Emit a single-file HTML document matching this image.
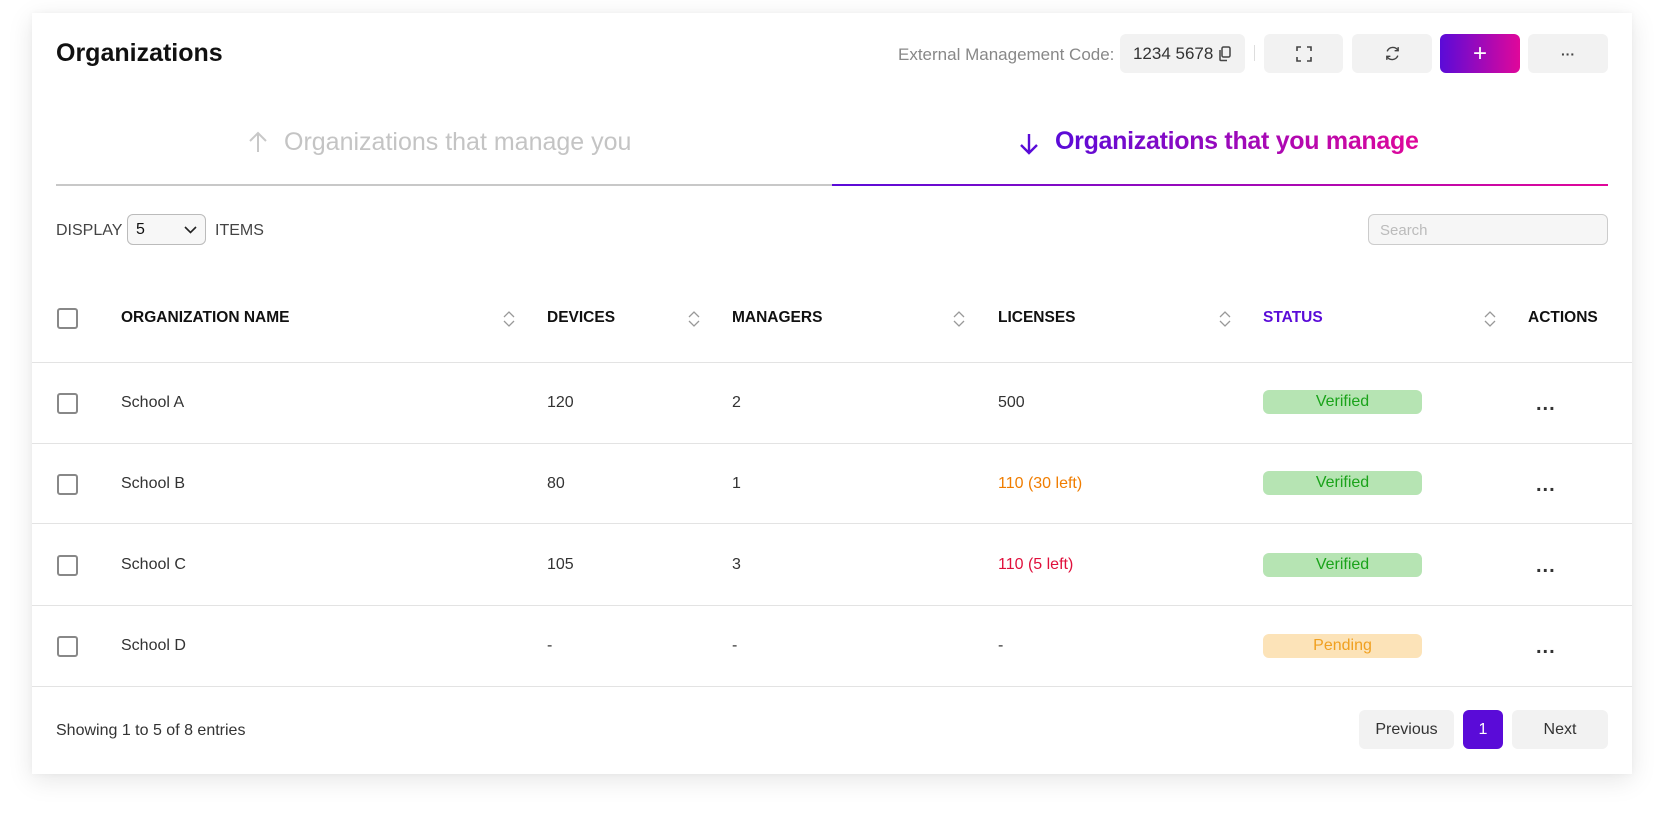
<!DOCTYPE html>
<html><head><meta charset="utf-8"><style>
*{box-sizing:border-box;margin:0;padding:0}
body{width:1664px;height:838px;background:#fff;font-family:"Liberation Sans",sans-serif;position:relative;overflow:hidden;color:#333}
.card{position:absolute;left:32px;top:13px;width:1600px;height:761px;background:#fff;box-shadow:0 6px 24px rgba(0,0,0,.10),0 0 6px rgba(0,0,0,.04)}
.a{position:absolute;white-space:nowrap}
.btn{position:absolute;top:34px;height:39px;background:#f2f2f2;border-radius:6px;display:flex;align-items:center;justify-content:center}
.hd{font-weight:bold;font-size:15.5px;color:#111;top:309px}
.sort{position:absolute;top:310px;width:14px;height:18px}
.cb{position:absolute;left:57px;width:21px;height:21px;border:2px solid #888;border-radius:3px}
.cell{font-size:16px;color:#333}
.line{position:absolute;left:32px;width:1600px;height:1px;background:#e3e3e3}
.badge{position:absolute;left:1263px;width:159px;height:24px;border-radius:6px;font-size:16px;text-align:center;line-height:24px}
.v{background:#b6e4b3;color:#1aa31a}
.p{background:#fce3b8;color:#f0a020}
.dots{position:absolute;left:1536px;font-size:20px;font-weight:bold;color:#333;letter-spacing:1px}
</style></head><body>
<div class="card"></div>
<div class="a" style="left:56px;top:39px;font-size:25px;font-weight:bold;color:#111">Organizations</div>
<div class="a" style="left:898px;top:45px;font-size:17px;color:#888">External Management Code:</div>
<div class="btn" style="left:1120px;width:125px;font-size:17px;color:#333">1234 5678&nbsp;<svg width="14" height="16" viewBox="0 0 14 16"><rect x="4" y="1" width="8" height="10" rx="1.5" fill="none" stroke="#444" stroke-width="1.5"/><path d="M2 4v9.5a1 1 0 0 0 1 1h6" fill="none" stroke="#444" stroke-width="1.5"/></svg></div>
<div class="a" style="left:1254px;top:45px;width:1px;height:16px;background:#ddd"></div>
<div class="btn" style="left:1264px;width:79px"><svg width="16" height="16" viewBox="0 0 16 16" fill="none" stroke="#444" stroke-width="1.6"><path d="M1 5V1h4M11 1h4v4M15 11v4h-4M5 15H1v-4"/></svg></div>
<div class="btn" style="left:1352px;width:80px"><svg width="17" height="17" viewBox="0 0 24 24" fill="none" stroke="#444" stroke-width="2"><path d="M20 8A8.5 8.5 0 0 0 4.5 9M4 16a8.5 8.5 0 0 0 15.5-1"/><path d="M20 3v5h-5M4 21v-5h5"/></svg></div>
<div class="btn" style="left:1440px;width:80px;background:linear-gradient(90deg,#5a0bd8,#e0079a);color:#fff;font-size:24px">+</div>
<div class="btn" style="left:1528px;width:80px;font-size:14px;color:#444;font-weight:bold">···</div>
<svg class="a" style="left:248px;top:131px" width="20" height="22" viewBox="0 0 20 22" fill="none" stroke="#c8c8c8" stroke-width="2"><path d="M10 21V2M2 10l8-8 8 8"/></svg>
<div class="a" style="left:284px;top:128px;font-size:25px;color:#c4c4c4">Organizations that manage you</div>
<svg class="a" style="left:1019px;top:133px" width="20" height="22" viewBox="0 0 20 22" fill="none" stroke="#5a0bd8" stroke-width="2.4"><path d="M10 1v19M2 12l8 8 8-8"/></svg>
<div class="a" style="left:1055px;top:127px;font-size:25px;letter-spacing:-0.3px;font-weight:bold;background:linear-gradient(90deg,#5a0bd8,#e0079a);-webkit-background-clip:text;background-clip:text;color:transparent">Organizations that you manage</div>
<div class="a" style="left:56px;top:184px;width:776px;height:2px;background:#c8c8c8"></div>
<div class="a" style="left:832px;top:184px;width:776px;height:2px;background:linear-gradient(90deg,#5a0bd8,#e0079a)"></div>
<div class="a" style="left:56px;top:222px;font-size:16px;color:#444">DISPLAY</div>
<div class="a" style="left:127px;top:214px;width:79px;height:31px;border:1px solid #bbb;border-radius:6px;background:#f7f7f7;font-size:16px;padding:6px 8px;color:#111">5<svg style="position:absolute;right:8px;top:11px" width="13" height="8" viewBox="0 0 13 8" fill="none" stroke="#222" stroke-width="1.6"><path d="M1 1l5.5 5.5L12 1"/></svg></div>
<div class="a" style="left:215px;top:222px;font-size:16px;color:#444">ITEMS</div>
<div class="a" style="left:1368px;top:214px;width:240px;height:31px;border:1px solid #ccc;border-radius:6px;background:#f6f6f6;font-size:15px;color:#bbb;padding:7px 11px">Search</div>
<div class="cb" style="top:308px"></div>
<div class="a hd" style="left:121px">ORGANIZATION NAME</div>
<div class="a hd" style="left:547px">DEVICES</div>
<div class="a hd" style="left:732px">MANAGERS</div>
<div class="a hd" style="left:998px">LICENSES</div>
<div class="a hd" style="left:1263px;color:#5a0bd8">STATUS</div>
<div class="a hd" style="left:1528px">ACTIONS</div>
<svg class="sort" style="left:502px" viewBox="0 0 14 18" fill="none" stroke="#999" stroke-width="1.3"><path d="M2 7l5-5 5 5M2 11l5 5 5-5"/></svg>
<svg class="sort" style="left:687px" viewBox="0 0 14 18" fill="none" stroke="#999" stroke-width="1.3"><path d="M2 7l5-5 5 5M2 11l5 5 5-5"/></svg>
<svg class="sort" style="left:952px" viewBox="0 0 14 18" fill="none" stroke="#999" stroke-width="1.3"><path d="M2 7l5-5 5 5M2 11l5 5 5-5"/></svg>
<svg class="sort" style="left:1218px" viewBox="0 0 14 18" fill="none" stroke="#999" stroke-width="1.3"><path d="M2 7l5-5 5 5M2 11l5 5 5-5"/></svg>
<svg class="sort" style="left:1483px" viewBox="0 0 14 18" fill="none" stroke="#999" stroke-width="1.3"><path d="M2 7l5-5 5 5M2 11l5 5 5-5"/></svg>
<div class="line" style="top:362px"></div>
<div class="cb" style="top:393px"></div>
<div class="a cell" style="left:121px;top:394px">School A</div>
<div class="a cell" style="left:547px;top:394px">120</div>
<div class="a cell" style="left:732px;top:394px">2</div>
<div class="a cell" style="left:998px;top:394px">500</div>
<div class="badge v" style="top:390px">Verified</div>
<div class="dots" style="top:393px">...</div>
<div class="line" style="top:443px"></div>
<div class="cb" style="top:474px"></div>
<div class="a cell" style="left:121px;top:475px">School B</div>
<div class="a cell" style="left:547px;top:475px">80</div>
<div class="a cell" style="left:732px;top:475px">1</div>
<div class="a cell" style="left:998px;top:475px;color:#f07d00">110 (30 left)</div>
<div class="badge v" style="top:471px">Verified</div>
<div class="dots" style="top:474px">...</div>
<div class="line" style="top:523px"></div>
<div class="cb" style="top:555px"></div>
<div class="a cell" style="left:121px;top:556px">School C</div>
<div class="a cell" style="left:547px;top:556px">105</div>
<div class="a cell" style="left:732px;top:556px">3</div>
<div class="a cell" style="left:998px;top:556px;color:#e0103c">110 (5 left)</div>
<div class="badge v" style="top:553px">Verified</div>
<div class="dots" style="top:555px">...</div>
<div class="line" style="top:605px"></div>
<div class="cb" style="top:636px"></div>
<div class="a cell" style="left:121px;top:637px">School D</div>
<div class="a cell" style="left:547px;top:637px">-</div>
<div class="a cell" style="left:732px;top:637px">-</div>
<div class="a cell" style="left:998px;top:637px">-</div>
<div class="badge p" style="top:634px">Pending</div>
<div class="dots" style="top:636px">...</div>
<div class="line" style="top:686px"></div>
<div class="a cell" style="left:56px;top:722px">Showing 1 to 5 of 8 entries</div>
<div class="btn" style="left:1359px;top:710px;width:95px;font-size:16px;color:#333">Previous</div>
<div class="btn" style="left:1463px;top:710px;width:40px;background:#5a0bd8;color:#fff;font-size:16px">1</div>
<div class="btn" style="left:1512px;top:710px;width:96px;font-size:16px;color:#333">Next</div>
</body></html>
